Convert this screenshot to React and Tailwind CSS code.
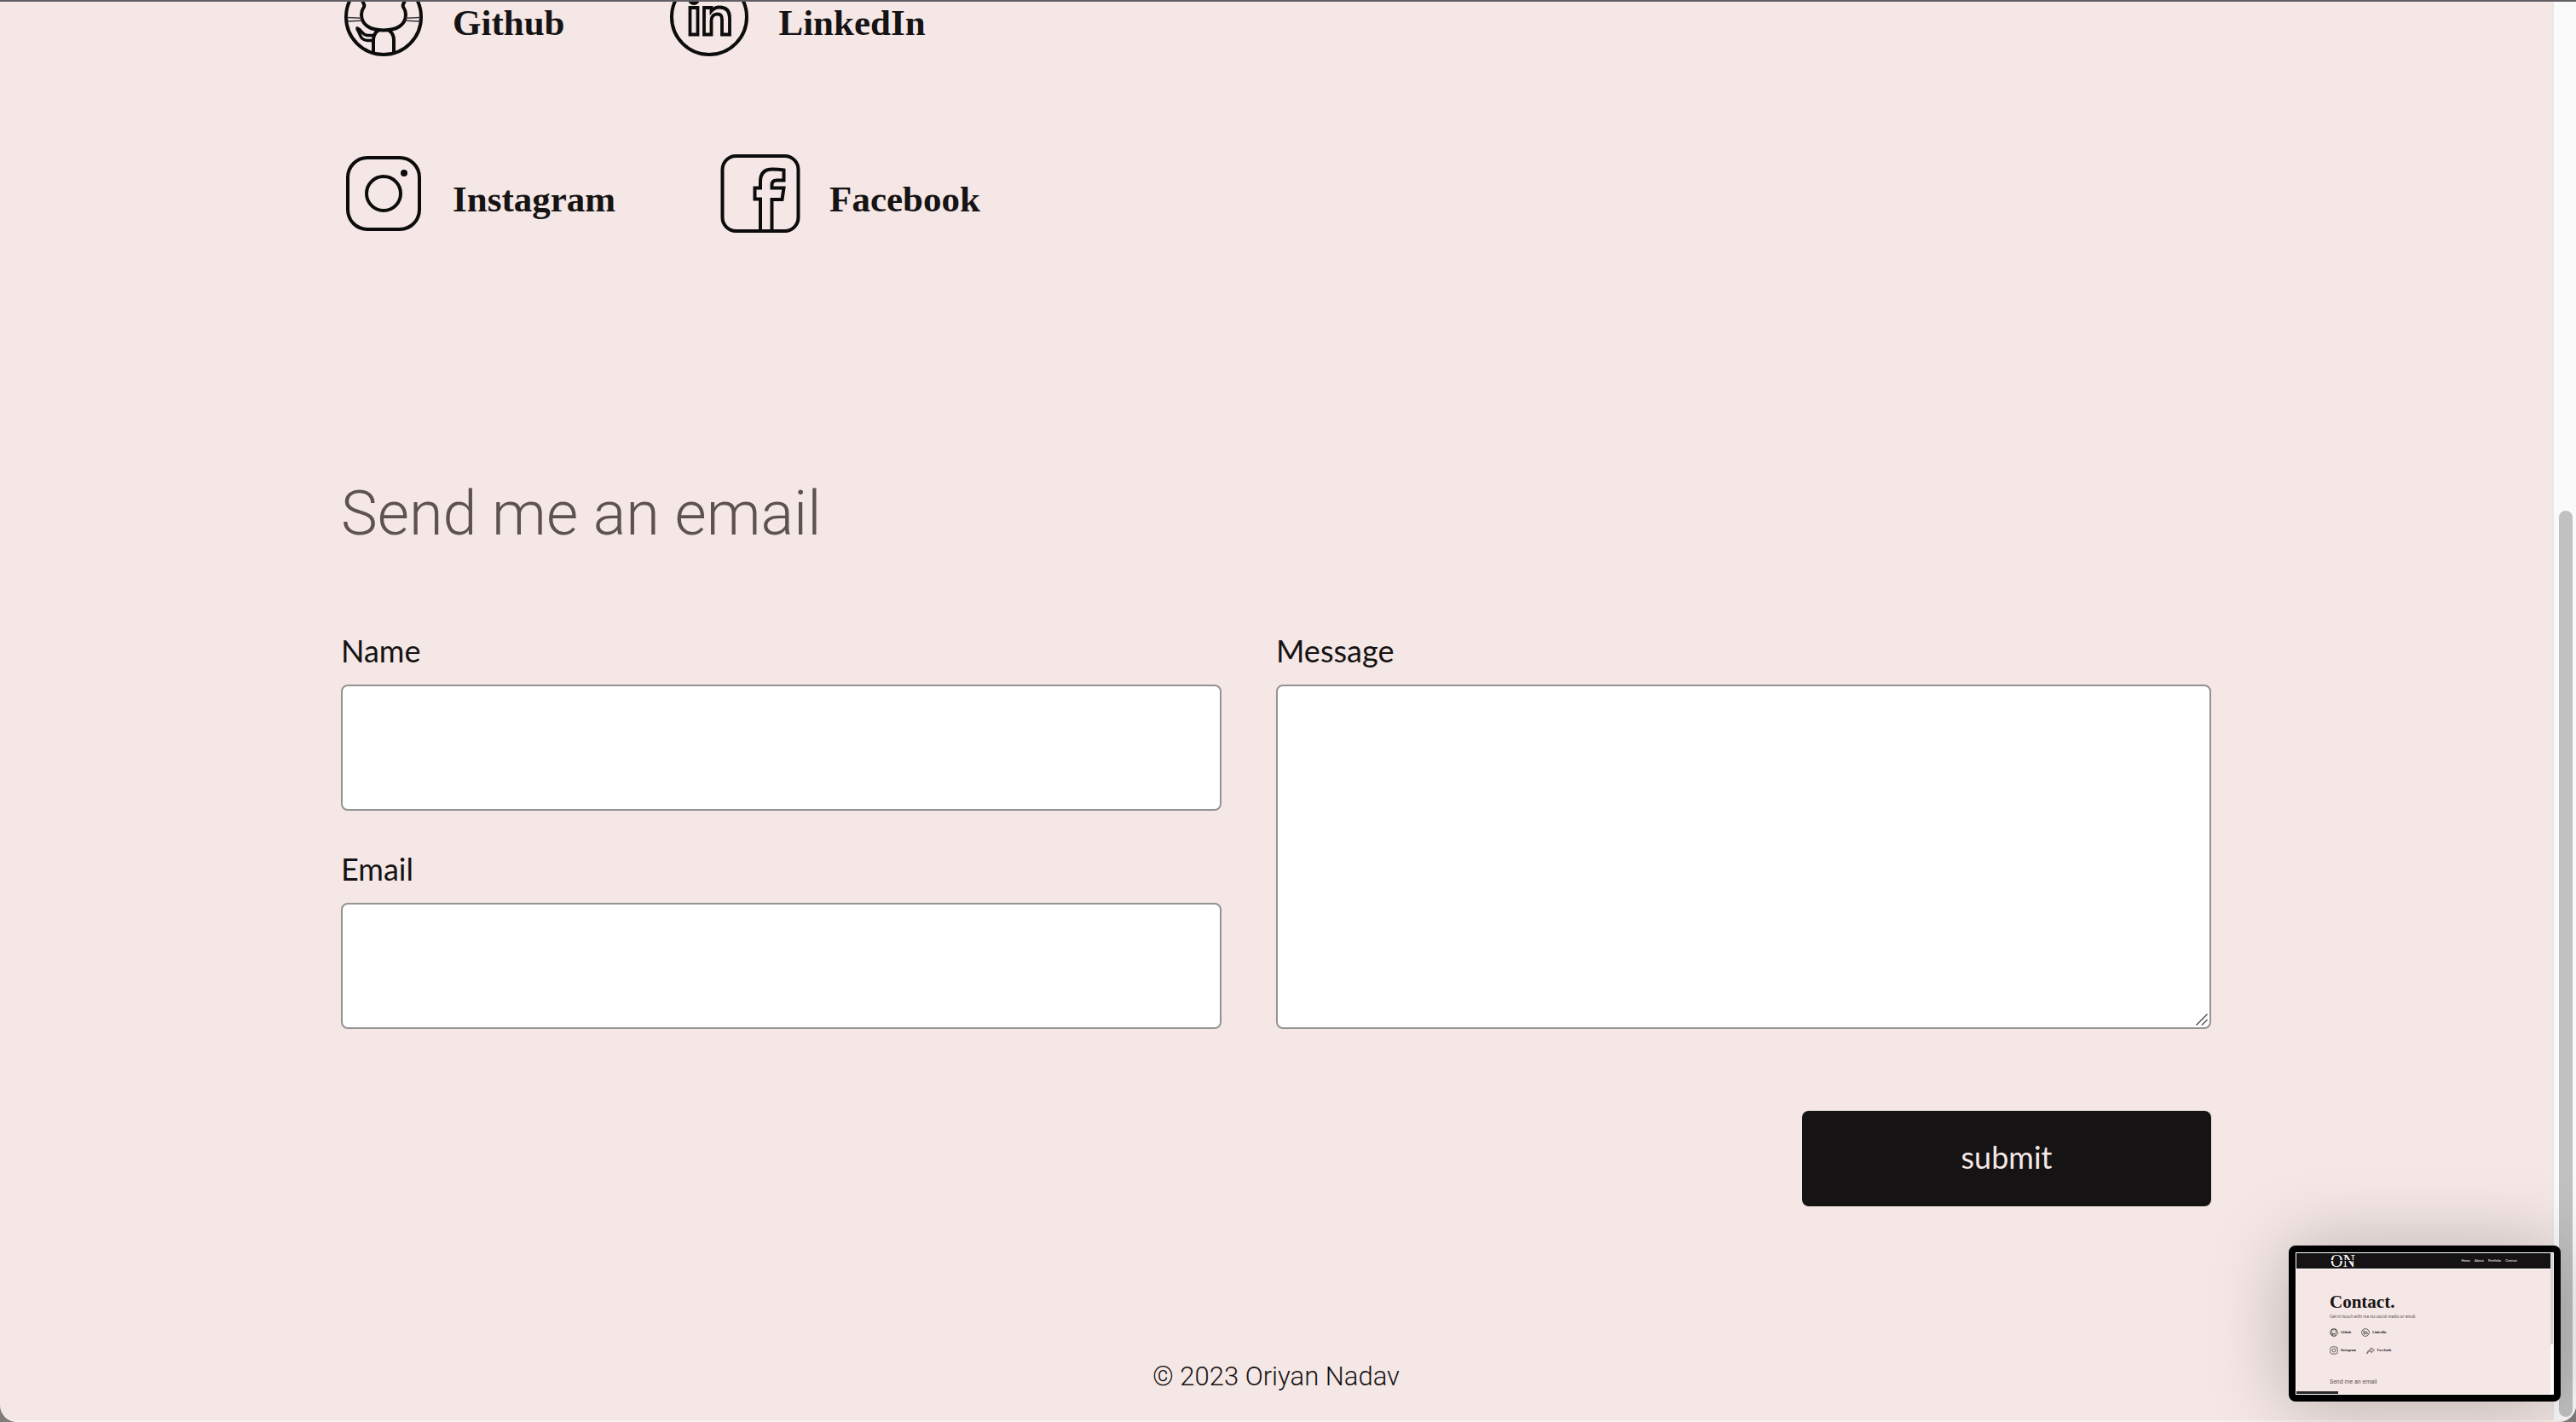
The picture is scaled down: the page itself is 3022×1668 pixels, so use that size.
function Icon({ className = "size-[100px]", width = 4, children }) {
  return (
    <svg viewBox="0 0 100 100" className={"shrink-0 " + className} fill="none" stroke="#0c0c0c" strokeWidth={width} aria-hidden="true">
      {children}
    </svg>
  );
}

function GithubIcon(props) {
  return (
    <Icon {...props}>
      <circle cx="50" cy="50" r="44" />
      <path d="M28 14C24 20 24 28 26 33C27 35 28 36 27 38C25 41 24 43 24 47C24 59 34 65.5 50 65.5C66 65.5 76 59 76 47C76 43 75 41 73 38C72 36 73 35 74 33C76 28 76 20 72 14C66 14 62 18 60 20C54 18 46 18 40 20C38 18 34 14 28 14Z" />
      <path d="M7 50.5L24 51.3M7.5 55L24.5 54.2M93 50.5L76 51.3M92.5 55L75.5 54.2" strokeWidth="1.4" stroke="#3a3838" />
      <path d="M38 93V77C38 71 40 68 44 65.5M62 93V77C62 71 60 68 56 65.5" />
      <path d="M19 63C25 65 24 71 31 71.5H38M19 64C23 70 22 77 31 77.5H38" strokeLinecap="round" strokeWidth="3.5" />
    </Icon>
  );
}

function LinkedInIcon(props) {
  return (
    <Icon {...props}>
      <circle cx="50" cy="50" r="44" />
      <g strokeWidth="3.8">
        <circle cx="32" cy="29" r="5" />
        <path d="M27.5 39H36.5V70.5H27.5Z" />
        <path d="M44 70.5V39H52.5V43C55 40 58 38.5 62 38.5C70 38.5 74 43 74 51V70.5H65V53C65 48.5 63.5 46.5 59.5 46.5C55 46.5 52.5 49.5 52.5 54V70.5Z" />
      </g>
    </Icon>
  );
}

function InstagramIcon(props) {
  return (
    <Icon {...props}>
      <rect x="8" y="8" width="84" height="84" rx="23" />
      <circle cx="50" cy="50" r="20" />
      <circle cx="74" cy="26" r="4" fill="#0c0c0c" stroke="none" />
    </Icon>
  );
}

function FacebookIcon(props) {
  return (
    <Icon {...props}>
      <rect x="5.5" y="6" width="89" height="88" rx="16" />
      <path d="M50 94V56.5H43.5V43.5H50V36C50 26 55 21.5 64 21.5C69 21.5 73 21.7 77.5 22.5V34.5H69C65 34.5 63.5 36.5 63.5 40V43.5H77.5L75.5 57H63.5V94" />
    </Icon>
  );
}

function ShareIcon(props) {
  return (
    <Icon {...props}>
      <path d="M8 88C12 58 28 42 58 40V20L94 48L58 76V58C34 58 20 68 8 88Z" />
    </Icon>
  );
}

function SocialLink({ icon, label }) {
  return (
    <a href="#" className="flex items-center gap-[31px]">
      {icon}
      <span className="pt-3.5 font-['Liberation_Serif',serif] text-[43px] leading-[48px] font-bold">{label}</span>
    </a>
  );
}

const inputClass = "h-[148px] w-full rounded-lg border-2 border-[#939393] bg-white px-6 text-4xl outline-none";
const labelClass = "mb-4 block text-4xl leading-[48px]";

function MiniLink({ icon, label }) {
  return (
    <span className="flex items-center gap-[3px]">
      {icon}
      <span className="font-['Liberation_Serif',serif] text-[4px] leading-[8px] font-bold">{label}</span>
    </span>
  );
}

function Preview() {
  return (
    <aside className="absolute right-[18px] bottom-6 w-[319px] rounded-lg border-8 border-black bg-black shadow-[0_4px_90px_rgba(0,0,0,0.25)]">
      <div className="relative flex h-[167px] border border-white bg-[#f4e7e5]">
        <div className="flex-1">
          <div className="flex h-[18px] items-center justify-between bg-[#161314] pr-[39px] pl-10 text-white">
            <span className="relative font-['Liberation_Serif',serif] text-[20px] leading-[18px]">
              ON
              <span className="absolute inset-x-0 top-2 h-px bg-[#161314]" />
            </span>
            <span className="flex gap-[5px] text-[4px] leading-[8px]">
              <span>Home</span>
              <span>About</span>
              <span>Portfolio</span>
              <span>Contact</span>
            </span>
          </div>
          <div className="border-t border-white pl-[39px]">
            <div className="mt-[26px] font-['Liberation_Serif',serif] text-[21px] leading-[24px] font-bold">Contact.</div>
            <div className="mt-px text-[5px] leading-[8px] text-[#5d5250]">Get in touch with me via social media or email.</div>
            <div className="mt-[10px] flex h-[10px] items-center gap-3">
              <MiniLink icon={<GithubIcon className="size-[10px]" width={6} />} label="Github" />
              <MiniLink icon={<LinkedInIcon className="size-[10px]" width={6} />} label="LinkedIn" />
            </div>
            <div className="mt-[11px] flex h-[10px] items-center gap-3">
              <MiniLink icon={<InstagramIcon className="size-[10px]" width={6} />} label="Instagram" />
              <MiniLink icon={<ShareIcon className="size-[10px]" width={6} />} label="Facebook" />
            </div>
            <div className="mt-[28px] font-[Roboto] text-[7px] leading-[8px] text-[#5d5250]">Send me an email</div>
          </div>
        </div>
        <div className="w-[3px] bg-white">
          <div className="h-[107px] bg-[#d5d5d5]" />
        </div>
        <div className="absolute bottom-0 left-0 h-[3px] w-[49px] bg-[#2a2728]" />
      </div>
    </aside>
  );
}

export default function App() {
  return (
    <div className="relative bg-[#7f7c7a] font-[Lato,sans-serif] text-[#161314]">
      <div className="flex min-h-screen overflow-hidden rounded-b-[20px] border-t-2 border-b-2 border-t-[#625f64] border-b-[#f9f1f0] bg-[#f4e7e5]">
        <div className="flex-1 overflow-hidden px-100">
          <main className="-mt-8">
            <nav aria-label="Social media">
              <div className="flex gap-[120px]">
                <SocialLink icon={<GithubIcon />} label="Github" />
                <SocialLink icon={<LinkedInIcon />} label="LinkedIn" />
              </div>
              <div className="mt-[107px] flex gap-[120px]">
                <SocialLink icon={<InstagramIcon />} label="Instagram" />
                <SocialLink icon={<FacebookIcon />} label="Facebook" />
              </div>
            </nav>

            <h2 className="mt-[286px] font-[Roboto,sans-serif] text-7xl leading-[80px] font-light text-[#5d5250]">Send me an email</h2>

            <form className="mt-24" onSubmit={(e) => e.preventDefault()}>
              <div className="grid grid-cols-2">
                <div className="flex flex-col gap-11 pr-16">
                  <div>
                    <label htmlFor="name" className={labelClass}>Name</label>
                    <input id="name" type="text" className={inputClass} />
                  </div>
                  <div>
                    <label htmlFor="email" className={labelClass}>Email</label>
                    <input id="email" type="email" className={inputClass} />
                  </div>
                </div>
                <div className="flex flex-col">
                  <label htmlFor="message" className={labelClass}>Message</label>
                  <div className="relative flex flex-1">
                    <textarea id="message" className="w-full resize-none rounded-lg border-2 border-[#939393] bg-white p-6 text-4xl outline-none" />
                    <svg viewBox="0 0 14 14" className="pointer-events-none absolute right-1 bottom-1 size-[14px]" stroke="#555" strokeWidth="1.5" aria-hidden="true">
                      <path d="M0.5 13.5L13.5 0.5M7 13.5L13.5 7" />
                    </svg>
                  </div>
                </div>
              </div>
              <div className="mt-24 flex justify-end">
                <button type="submit" className="h-28 w-[480px] rounded-lg bg-[#161314] pb-1 text-4xl text-[#f4e7e5]">submit</button>
              </div>
            </form>
          </main>
          <footer className="mt-[180px] pb-[30px] text-center font-[Roboto,sans-serif] text-[31px] leading-[40px] font-light">© 2023 Oriyan Nadav</footer>
        </div>

        <div className="flex w-7 flex-col border-l-2 border-[#e8e8e8] bg-[#fafafa] pr-1 pb-1 pl-1.5">
          <div className="mt-[597px] flex-1 rounded-full bg-[#c1c1c1]" />
        </div>
      </div>
      <Preview />
    </div>
  );
}
